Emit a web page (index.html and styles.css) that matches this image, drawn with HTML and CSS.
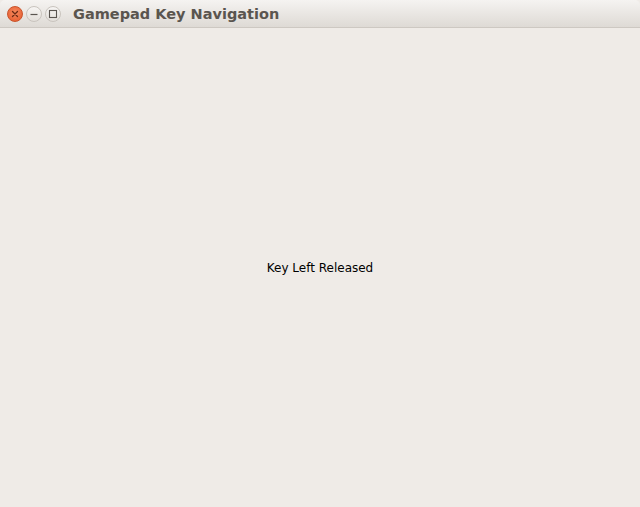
FILE: index.html
```html
<!DOCTYPE html>
<html>
<head>
<meta charset="utf-8">
<link rel="stylesheet" href="styles.css">
</head>
<body>
<div class="window">
  <div class="titlebar">
    <div class="buttons">
      <span class="btn close"><svg width="16" height="16" viewBox="0 0 16 16"><path d="M5.5 5.5L10.5 10.5M10.5 5.5L5.5 10.5" stroke="#6b2a14" stroke-width="1.3" stroke-linecap="round"/></svg></span>
      <span class="btn"><svg width="16" height="16" viewBox="0 0 16 16"><path d="M4.5 8.5H11.5" stroke="#5a5550" stroke-width="1.2"/></svg></span>
      <span class="btn"><svg width="16" height="16" viewBox="0 0 16 16"><rect x="4.5" y="4.5" width="7" height="7" fill="none" stroke="#5a5550" stroke-width="1.1"/></svg></span>
    </div>
    <div class="title">Gamepad Key Navigation</div>
  </div>
  <div class="content">
    <div class="label">Key Left Released</div>
  </div>
</div>
</body>
</html>
```
FILE: styles.css
```css
html, body {
  margin: 0;
  padding: 0;
  width: 640px;
  height: 507px;
  overflow: hidden;
  background: #efebe7;
}
.window {
  display: flex;
  flex-direction: column;
  height: 507px;
}
.titlebar {
  height: 27px;
  flex: none;
  display: flex;
  align-items: center;
  background: linear-gradient(#f5f3f1, #dedad5);
  border-bottom: 1px solid #cdc8c2;
  border-radius: 5px 5px 0 0;
  padding-left: 7px;
}
.buttons {
  display: flex;
  gap: 3px;
}
.btn {
  width: 16px;
  height: 16px;
  border-radius: 50%;
  box-sizing: border-box;
  border: 1px solid #c9c4be;
  background: linear-gradient(#f7f5f3, #e3dfda);
  display: flex;
  align-items: center;
  justify-content: center;
}
.btn svg { display: block; margin: -1px; }
.btn.close {
  border-color: #c9532a;
  background: radial-gradient(circle at 50% 40%, #f78a5e, #e4572a);
}
.title {
  margin-left: 12px;
  font-family: "DejaVu Sans", sans-serif;
  font-weight: bold;
  font-size: 14.5px;
  color: #5a554f;
  margin-top: 0;
}
.content {
  flex: 1;
  display: flex;
  align-items: center;
  justify-content: center;
}
.label {
  font-family: "DejaVu Sans", sans-serif;
  font-size: 12px;
  color: #000;
  margin-top: 1px;
}
```
